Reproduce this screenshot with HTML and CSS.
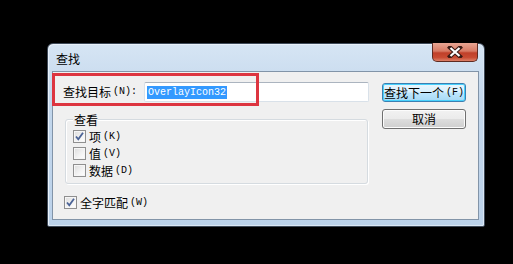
FILE: index.html
```html
<!DOCTYPE html>
<html lang="zh-CN">
<head>
<meta charset="utf-8">
<title>查找</title>
<link rel="stylesheet" href="styles.css">
</head>
<body>
<div class="window">
  <div class="titlebar">
    <span class="title">查找</span>
    <div class="close">
      <svg width="16" height="12" viewBox="0 0 16 12"><path d="M3 1.5 L13 10.5 M13 1.5 L3 10.5" stroke="#3a1a14" stroke-width="4.2" stroke-linecap="square"/><path d="M3.5 2 L12.5 10 M12.5 2 L3.5 10" stroke="#fff" stroke-width="2.2"/></svg>
    </div>
  </div>
  <div class="client">
    <div class="left">
      <div class="findrow">
        <span class="label"><span class="cjk">查找目标</span><span class="lat">(N):</span></span>
        <div class="input"><span class="sel">OverlayIcon32</span></div>
      </div>
      <div class="group">
        <span class="legend cjk">查看</span>
        <div class="check"><span class="box on"><svg width="11" height="11" viewBox="0 0 11 11"><path d="M2 5.5 L4.3 8.3 L9 1.8" fill="none" stroke="#4b6396" stroke-width="1.8"/></svg></span><span class="cjk">项</span><span class="lat">(K)</span></div>
        <div class="check"><span class="box"></span><span class="cjk">值</span><span class="lat">(V)</span></div>
        <div class="check"><span class="box"></span><span class="cjk">数据</span><span class="lat">(D)</span></div>
      </div>
      <div class="check whole"><span class="box on"><svg width="11" height="11" viewBox="0 0 11 11"><path d="M2 5.5 L4.3 8.3 L9 1.8" fill="none" stroke="#4b6396" stroke-width="1.8"/></svg></span><span class="cjk">全字匹配</span><span class="lat">(W)</span></div>
    </div>
    <div class="buttons">
      <div class="btn default"><span class="cjk">查找下一个</span><span class="lat">(F)</span></div>
      <div class="btn"><span class="cjk">取消</span></div>
    </div>
    <div class="highlight"></div>
  </div>
</div>
</body>
</html>
```
FILE: styles.css
```css
* { box-sizing: border-box; }
html, body { margin: 0; padding: 0; }
body {
  background: #000;
  width: 513px;
  height: 264px;
  overflow: hidden;
  padding: 43px 0 0 47px;
  font-family: "Noto Sans CJK SC", sans-serif;
  color: #000;
}
.cjk { font-family: "Noto Sans CJK SC", sans-serif; font-size: 12px; line-height: 14px; }
.lat { font-family: "Liberation Mono", monospace; font-size: 10px; line-height: 14px; margin-left: 2px; }

.window {
  width: 438px;
  height: 184px;
  border: 1px solid #3e4a59;
  border-radius: 6px 6px 2px 2px;
  background: linear-gradient(180deg, #d6e5f4 0%, #c3d7ec 30%, #bcd2ea 100%);
  box-shadow: inset 1px 1px 0 #e9f1fa, inset -1px -1px 0 #dbe7f4;
  padding: 0 5px 6px 4px;
  display: flex;
  flex-direction: column;
}
.titlebar {
  height: 27px;
  display: flex;
  align-items: flex-start;
  justify-content: space-between;
  flex: none;
}
.title {
  font-size: 12px;
  line-height: 14px;
  margin: 8px 0 0 4px;
}
.close {
  width: 46px;
  height: 19px;
  margin: -1px 1px 0 0;
  border: 1px solid #5e2b22;
  border-top: none;
  border-radius: 0 0 5px 5px;
  background: linear-gradient(180deg, #e8a593 0%, #d77a64 45%, #c0402a 55%, #c84b32 80%, #dc8068 100%);
  display: flex;
  align-items: center;
  justify-content: center;
}
.client {
  position: relative;
  flex: 1;
  background: #f0f0f0;
  border: 1px solid #8294a8;
  padding: 10px 0 0 10px;
  display: flex;
  gap: 13px;
}
.left { width: 306px; display: flex; flex-direction: column; }
.findrow { display: flex; align-items: center; height: 20px; }
.label { width: 81px; display: flex; align-items: center; }
.input {
  flex: 1;
  height: 20px;
  background: #fff;
  border: 1px solid #d9e1e9;
  border-top-color: #abb4bf;
  border-radius: 2px;
  padding: 0 0 0 2px;
  display: flex;
  align-items: center;
}
.sel {
  display: block;
  background: #3399ff;
  color: #fff;
  font-family: "Liberation Mono", monospace;
  font-size: 10px;
  line-height: 13px;
  height: 13px;
  padding: 0 1px;
}
.group {
  margin: 17px 0 0 2px;
  width: 303px;
  height: 65px;
  border: 1px solid #d5dbe0;
  border-radius: 3px;
  box-shadow: inset 1px 1px 0 #fff, 1px 1px 0 #fff;
  padding: 0 0 0 7px;
  display: flex;
  flex-direction: column;
}
.legend {
  align-self: flex-start;
  margin: -7px 0 0 0;
  padding: 0 0 0 1px;
  background: #f0f0f0;
  height: 14px;
  margin-bottom: 1px;
}
.check { display: flex; align-items: center; height: 17px; gap: 3px; }
.check .lat { margin-left: -1px; }
.box {
  width: 13px;
  height: 13px;
  border: 1px solid #8f8f8f;
  background: linear-gradient(135deg, #dcdcdc 0%, #f4f4f4 60%, #fff 100%);
  box-shadow: inset 0 0 0 1px #f6f6f6;
  display: flex;
  align-items: center;
  justify-content: center;
  flex: none;
}
.box svg { display: block; }
.whole { margin: 10px 0 0 1px; }

.buttons { display: flex; flex-direction: column; gap: 7px; padding-top: 1px; }
.btn {
  width: 84px;
  height: 20px;
  border: 1px solid #707070;
  border-radius: 3px;
  background: linear-gradient(180deg, #f2f2f2 0%, #ebebeb 48%, #dddddd 52%, #cfcfcf 100%);
  box-shadow: inset 0 0 0 1px #fcfcfc;
  display: flex;
  align-items: center;
  justify-content: center;
}
.btn.default {
  border-color: #3c7fb1;
  background: linear-gradient(180deg, #eaf6fd 0%, #d9f0fc 48%, #bee6fd 52%, #a7d9f5 100%);
  box-shadow: inset 0 0 0 1px #48d1fc;
  height: 19px;
}
.highlight {
  position: absolute;
  left: -1px;
  top: 1px;
  width: 207px;
  height: 33px;
  border: 3px solid #dd3540;
  pointer-events: none;
}
```
